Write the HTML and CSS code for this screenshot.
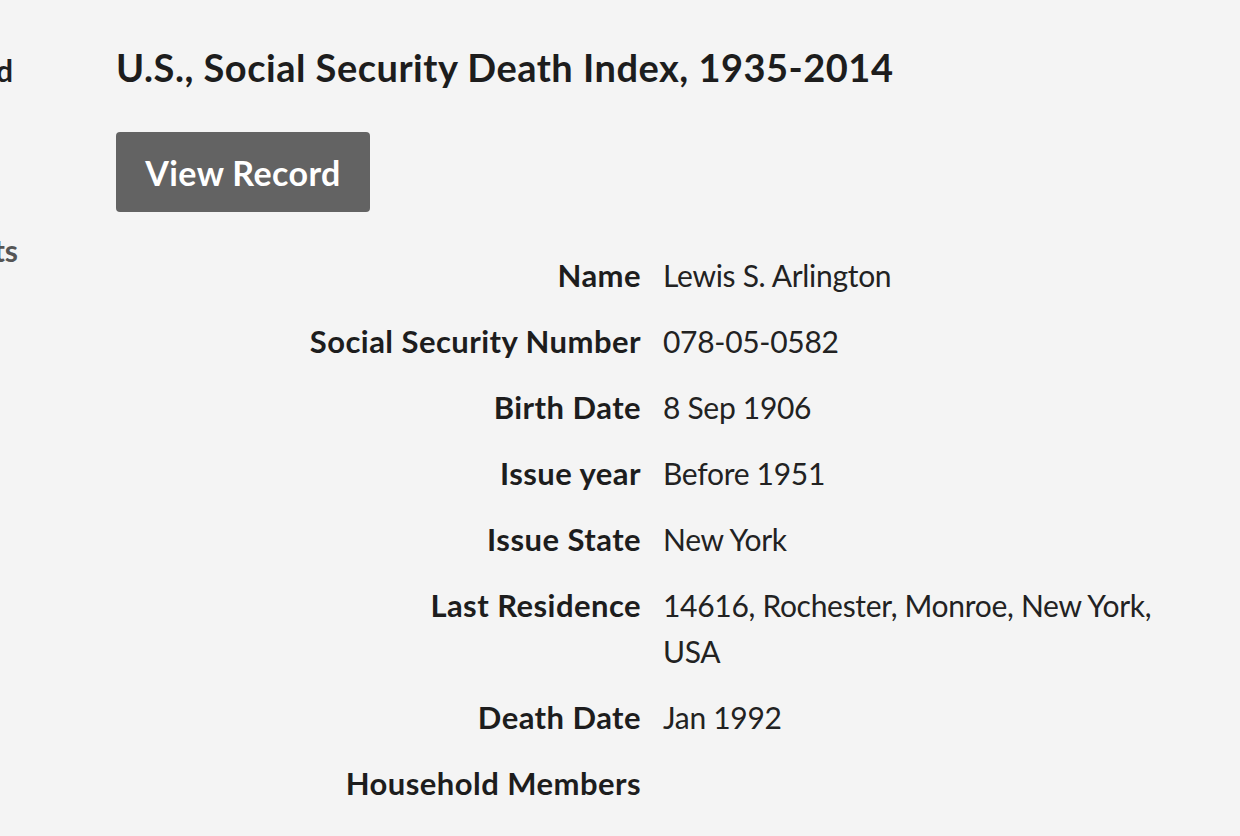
FILE: index.html
```html
<!DOCTYPE html>
<html lang="en">
<head>
  <meta charset="UTF-8" />
  <meta name="viewport" content="width=device-width, initial-scale=1.0" />
  <title>U.S., Social Security Death Index, 1935-2014</title>

  <link rel="stylesheet" href="styles.css">
</head>
<body>

  <div class="page">
    <!-- Barra lateral (cortada pela janela) -->
    <div class="sidebar">
      <div class="side-link side-active">Record</div>
      <div class="side-link side-muted">Facts</div>
    </div>

    <div class="main">
      <h1>U.S., Social Security Death Index, 1935-2014</h1>

      <button class="view-button">View Record</button>

      <!-- Dados do registro -->
      <dl class="record">
        <dt>Name</dt>
        <dd>Lewis S. Arlington</dd>

        <dt>Social Security Number</dt>
        <dd>078-05-0582</dd>

        <dt>Birth Date</dt>
        <dd>8 Sep 1906</dd>

        <dt>Issue year</dt>
        <dd>Before 1951</dd>

        <dt>Issue State</dt>
        <dd>New York</dd>

        <dt>Last Residence</dt>
        <dd>14616, Rochester, Monroe, New York, USA</dd>

        <dt>Death Date</dt>
        <dd>Jan 1992</dd>

        <dt>Household Members</dt>
        <dd></dd>
      </dl>
    </div>
  </div>

</body>
</html>
```

FILE: styles.css
```css
body {
  font-family: Lato, "Open Sans", sans-serif;
  background-color: #f4f4f4;
  color: #1f1f1f;
  margin: 0;
  padding: 0;
}

.page {
  display: flex;
}

.sidebar {
  width: 20px;
  overflow: hidden;
  display: flex;
  flex-direction: column;
  align-items: flex-end;
  padding-top: 52px;
  gap: 144px;
}

.side-link {
  white-space: nowrap;
  font-size: 30px;
  font-weight: bold;
}

.side-active {
  color: #1f1f1f;
  padding-right: 7px;
}

.side-muted {
  color: #555;
  padding-right: 2px;
}

.main {
  padding-left: 96px;
  padding-top: 44px;
  width: 1064px;
}

h1 {
  margin: 0 0 42px;
  font-size: 38px;
  line-height: 46px;
  letter-spacing: 0.5px;
  color: #1d1d1d;
}

.view-button {
  display: block;
  width: 254px;
  height: 80px;
  background-color: #636363;
  color: white;
  border: none;
  border-radius: 4px;
  font-family: inherit;
  font-size: 34px;
  font-weight: bold;
  letter-spacing: 0.4px;
  cursor: pointer;
}

.record {
  display: grid;
  grid-template-columns: 525px 1fr;
  column-gap: 22px;
  row-gap: 20px;
  margin: 40px 0 0;
  font-size: 30px;
  line-height: 46px;
}

.record dt {
  text-align: right;
  font-size: 31px;
  font-weight: bold;
  letter-spacing: 0.45px;
  color: #1d1d1d;
}

.record dd {
  margin: 0;
  color: #222;
  letter-spacing: -0.3px;
  max-width: 500px;
}
```
